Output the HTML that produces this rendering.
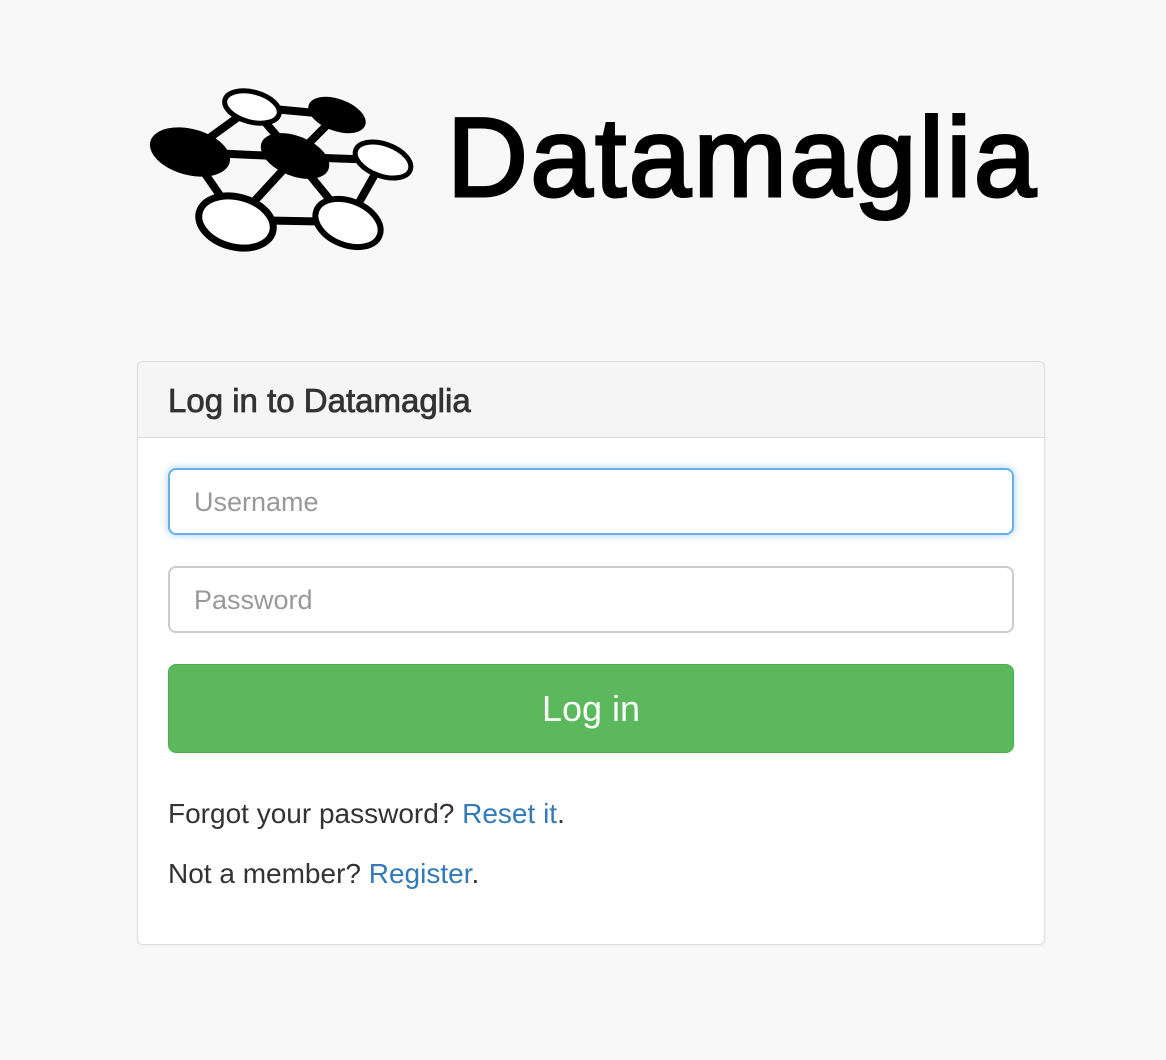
<!DOCTYPE html>
<html><head><style>
body{margin:0;background:#f8f8f8;width:1166px;height:1060px;font-family:"Liberation Sans",Arial,sans-serif;position:relative;overflow:hidden}
.logo{position:absolute;left:140px;top:80px}
.brand{position:absolute;left:447px;top:93px;font-size:112px;color:#000;letter-spacing:2.5px;line-height:130px;-webkit-text-stroke:3px #000}
.panel{position:absolute;left:137px;top:361px;width:906px;height:582px;background:#fff;border:1px solid #ddd;border-radius:6px;box-shadow:0 1px 2px rgba(0,0,0,.05);overflow:hidden}
.head{height:75px;background:#f5f5f5;border-bottom:1px solid #ddd}
.head span{position:absolute;left:30px;top:20px;font-size:33px;color:#333;-webkit-text-stroke:0.8px #333}
.inp{position:absolute;left:30px;width:842px;height:63px;border:2px solid #ccc;border-radius:8px;box-sizing:content-box}
.inp span{position:absolute;left:24px;top:17px;font-size:27px;color:#999}
.btn{position:absolute;left:30px;top:302px;width:846px;height:89px;background:#5cb85c;border:1px solid #4cae4c;border-radius:8px;box-sizing:border-box;color:#fff;font-size:36px;text-align:center;line-height:87px}
.t{position:absolute;left:30px;font-size:28px;color:#333}
a{color:#337ab7;text-decoration:none}
</style></head><body>
<svg class="logo" width="290" height="180" viewBox="140 80 290 180">
<g stroke="#000" stroke-width="8">
<line x1="190" y1="152" x2="252" y2="107"/><line x1="252" y1="107" x2="337" y2="115"/>
<line x1="252" y1="107" x2="295" y2="157"/><line x1="337" y1="115" x2="295" y2="157"/>
<line x1="190" y1="152" x2="295" y2="157"/><line x1="295" y1="157" x2="383" y2="160"/>
<line x1="190" y1="152" x2="237" y2="220"/><line x1="295" y1="157" x2="237" y2="220"/>
<line x1="237" y1="220" x2="348" y2="222"/><line x1="295" y1="157" x2="348" y2="222"/>
<line x1="383" y1="160" x2="348" y2="222"/>
</g>
<g stroke="#000" fill="#fff">
<ellipse cx="252" cy="107" rx="28" ry="15" stroke-width="5" transform="rotate(15 252 107)"/>
<ellipse cx="383" cy="160" rx="29" ry="16" stroke-width="5" transform="rotate(20 383 160)"/>
<ellipse cx="236" cy="222" rx="38" ry="25" stroke-width="7" transform="rotate(15 236 222)"/>
<ellipse cx="348" cy="223" rx="34" ry="22" stroke-width="6" transform="rotate(22 348 223)"/>
</g>
<g fill="#000">
<ellipse cx="337" cy="115" rx="30" ry="16" transform="rotate(20 337 115)"/>
<ellipse cx="190" cy="152" rx="41" ry="23" transform="rotate(15 190 152)"/>
<ellipse cx="295" cy="156" rx="36" ry="20" transform="rotate(22 295 156)"/>
</g>
</svg>
<div class="brand">Datamaglia</div>
<div class="panel">
<div class="head"><span>Log in to Datamaglia</span></div>
<div class="inp" style="top:106px;border-color:#66afe9;box-shadow:0 0 8px rgba(102,175,233,.6)"><span>Username</span></div>
<div class="inp" style="top:204px"><span>Password</span></div>
<div class="btn">Log in</div>
<div class="t" style="top:436px">Forgot your password? <a>Reset it</a>.</div>
<div class="t" style="top:496px">Not a member? <a>Register</a>.</div>
</div>
</body></html>
